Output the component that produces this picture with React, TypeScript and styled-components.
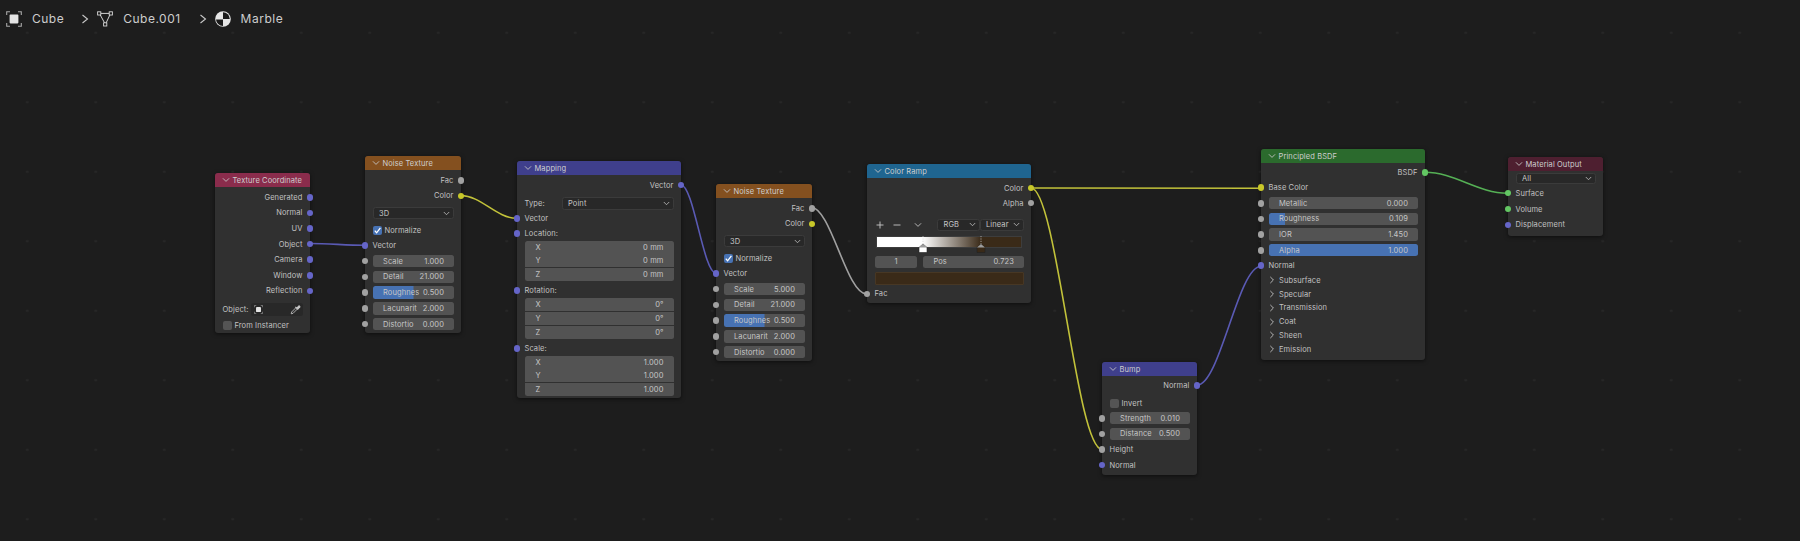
import React from "react";
import styled, { createGlobalStyle } from "styled-components";

const GlobalStyle = createGlobalStyle`
  html, body {
    margin: 0;
    padding: 0;
    background: #1d1d1d;
  }
  * {
    box-sizing: border-box;
  }
`;

const SOCKET = {
  vector: "#6565c8",
  value: "#a1a1a1",
  color: "#c7c729",
  shader: "#63c763",
};

const Canvas = styled.div`
  position: relative;
  width: 1800px;
  height: 541px;
  overflow: hidden;
  background-color: #1d1d1d;
  background-image: radial-gradient(circle, #272727 0, #272727 1px, transparent 1.6px);
  background-size: 68.5px 69.5px;
  background-position: -7px -2px;
  font-family: Inter, "Noto Sans", sans-serif;
  color: #c2c2c2;
`;

const Breadcrumb = styled.div`
  display: flex;
  align-items: center;
  height: 37px;
  padding-left: 6px;
  font-size: 12px;
  letter-spacing: 0.5px;
  color: #cdcdcd;
`;

const CrumbText = styled.span`
  margin-left: 10px;
`;

const CrumbArrow = styled.svg<{ $ml: number }>`
  margin: 0 8px 0 ${(p) => p.$ml}px;
`;

const Wires = styled.svg`
  position: absolute;
  left: 0;
  top: 0;
`;

const Node = styled.div<{ $x: number; $y: number; $w: number; $h: number }>`
  position: absolute;
  left: ${(p) => p.$x}px;
  top: ${(p) => p.$y}px;
  width: ${(p) => p.$w}px;
  height: ${(p) => p.$h}px;
  background: #303030;
  border-radius: 3px;
  box-shadow: 0 1px 4px rgba(0, 0, 0, 0.55);
  font-size: 7.5px;
  letter-spacing: 0.1px;
`;

const NodeHeader = styled.div<{ $color: string }>`
  display: flex;
  align-items: center;
  gap: 3px;
  height: 14px;
  padding-left: 6.5px;
  border-radius: 3px 3px 0 0;
  background: ${(p) => p.$color};
  color: #cecece;
`;

const NodeBody = styled.div<{ $pt?: number }>`
  display: flex;
  flex-direction: column;
  padding-top: ${(p) => p.$pt ?? 2.5}px;
`;

const Row = styled.div<{ $h?: number; $mt?: number; $right?: boolean }>`
  position: relative;
  flex: none;
  display: flex;
  align-items: center;
  justify-content: ${(p) => (p.$right ? "flex-end" : "flex-start")};
  height: ${(p) => p.$h ?? 15.6}px;
  margin-top: ${(p) => p.$mt ?? 0}px;
  padding: 0 7.5px;
  white-space: nowrap;
`;

const Socket = styled.span<{ $color: string; $side?: "left" | "right" }>`
  position: absolute;
  top: 50%;
  ${(p) => (p.$side === "right" ? "right" : "left")}: -3.3px;
  width: 6.6px;
  height: 6.6px;
  margin-top: -3.3px;
  border-radius: 50%;
  background: ${(p) => p.$color};
`;

const FieldBox = styled.div<{ $fill?: number; $w?: number; $gap?: number }>`
  display: flex;
  align-items: center;
  justify-content: space-between;
  flex: ${(p) => (p.$w ? "none" : "1")};
  width: ${(p) => (p.$w ? `${p.$w}px` : "auto")};
  height: 12.4px;
  margin-left: ${(p) => p.$gap ?? 0}px;
  padding: 0 9.5px 0 10.5px;
  border-radius: 2.5px;
  background-color: #535353;
  background-image: linear-gradient(#4772b3, #4772b3);
  background-repeat: no-repeat;
  background-size: ${(p) => (p.$fill ?? 0) * 100}% 100%;
  color: #c6c6c6;
`;

const IndexText = styled.span`
  flex: 1;
  text-align: center;
`;

const StackedFields = styled.div`
  display: flex;
  flex-direction: column;
  gap: 0.8px;
  margin: 0.9px 7.5px 0;
  border-radius: 2.5px;
  overflow: hidden;
`;

const StackedField = styled.div`
  display: flex;
  align-items: center;
  justify-content: space-between;
  height: 13px;
  padding: 0 10px 0 11px;
  background: #535353;
  color: #c6c6c6;
`;

const Dropdown = styled.div<{ $w?: number; $h?: number }>`
  display: flex;
  align-items: center;
  justify-content: space-between;
  flex: ${(p) => (p.$w ? "none" : "1")};
  width: ${(p) => (p.$w ? `${p.$w}px` : "auto")};
  height: ${(p) => p.$h ?? 12.5}px;
  padding: 0 2.5px 0 5.5px;
  border: 1px solid #3b3b3b;
  border-radius: 2.5px;
  background: #282828;
  color: #c6c6c6;
`;

const TypeDropdown = styled(Dropdown)`
  margin-left: auto;
`;

const CheckBox = styled.span<{ $on?: boolean }>`
  display: inline-flex;
  align-items: center;
  justify-content: center;
  flex: none;
  width: 9px;
  height: 9px;
  margin-right: 3px;
  border-radius: 2px;
  background: ${(p) => (p.$on ? "#4772b3" : "#545454")};
`;

const ObjectField = styled.div`
  display: flex;
  align-items: center;
  justify-content: space-between;
  width: 52px;
  height: 13px;
  margin-left: auto;
  padding: 0 2px 0 3px;
  border-radius: 2.5px;
  background: #282828;
`;

const PanelRow = styled(Row)`
  gap: 3px;
  padding-left: 7px;
  height: 13.8px;
`;

const RampTools = styled(Row)`
  height: 12.6px;
  margin-top: 8.2px;
  padding-left: 9px;
`;

const ToolGlyph = styled.span`
  display: inline-flex;
  justify-content: center;
  width: 8px;
  margin-right: 9px;
`;

const ToolChevron = styled(ToolGlyph)`
  margin-left: 4px;
  margin-right: 14px;
`;

const RampBar = styled.div`
  position: relative;
  height: 12.3px;
  margin: 4.7px 9px 0;
  border: 1px solid #3d3d3d;
  background: linear-gradient(
    to right,
    #fff 0,
    #fff 31.7%,
    #3a2a18 72.3%,
    #3a2a18 100%
  );
`;

const RampHandle = styled.svg<{ $at: number }>`
  position: absolute;
  left: ${(p) => p.$at}%;
  top: -1px;
  margin-left: -5px;
  overflow: visible;
`;

const ColorBar = styled.div`
  height: 13px;
  margin: 4.3px 7.5px 0;
  border: 1px solid #473724;
  border-radius: 1px;
  background: #3a2a18;
`;

const Chevron = ({ open = true, size = 8, color = "#c4c4c4" }: { open?: boolean; size?: number; color?: string }) => (
  <svg width={size} height={size} viewBox="0 0 8 8" fill="none">
    <path
      d={open ? "M1.2 2.6 L4 5.4 L6.8 2.6" : "M2.6 1.2 L5.4 4 L2.6 6.8"}
      stroke={color}
      strokeWidth="0.9"
      strokeLinecap="round"
      strokeLinejoin="round"
    />
  </svg>
);

const Check = () => (
  <svg width="9" height="9" viewBox="0 0 9 9" fill="none">
    <path d="M1.8 4.6 L3.6 6.8 L7.4 1.8" stroke="#fff" strokeWidth="1.3" />
  </svg>
);

const ObjectIcon = ({ size = 16 }: { size?: number }) => (
  <svg width={size} height={size} viewBox="0 0 16 16" fill="none">
    <rect x="3.6" y="3.6" width="8.8" height="8.8" rx="0.8" fill="#e4e4e4" />
    <path
      d="M0.7 4 V0.7 H4 M12 0.7 H15.3 V4 M15.3 12 V15.3 H12 M4 15.3 H0.7 V12"
      stroke="#a8a8a8"
      strokeWidth="1.1"
    />
  </svg>
);

const MeshIcon = () => (
  <svg width="16" height="16" viewBox="0 0 16 16" fill="none">
    <path d="M2.4 2.4 H13.6 L8.4 13.4 Z" stroke="#d4d4d4" strokeWidth="1" />
    <rect x="0.6" y="0.8" width="3.2" height="3.2" fill="#1d1d1d" stroke="#d8d8d8" strokeWidth="0.9" />
    <rect x="12.2" y="0.8" width="3.2" height="3.2" fill="#1d1d1d" stroke="#d8d8d8" strokeWidth="0.9" />
    <rect x="6.6" y="11.8" width="3.2" height="3.2" fill="#1d1d1d" stroke="#d8d8d8" strokeWidth="0.9" />
  </svg>
);

const MaterialIcon = () => (
  <svg width="16" height="16" viewBox="0 0 16 16">
    <circle cx="8" cy="8" r="7.8" fill="#e6e6e6" />
    <path d="M8 1.2 A6.8 6.8 0 0 1 14.8 8 H8 Z" fill="#1a1a1a" />
    <path d="M1 8.4 H8 V15 A7 7 0 0 1 1 8.4 Z" fill="#1a1a1a" />
  </svg>
);

const Dropper = () => (
  <svg width="11" height="11" viewBox="0 0 11 11" fill="none">
    <path d="M1.2 9.8 L1.6 8 L6 3.6 L7.4 5 L3 9.4 Z" fill="#333" stroke="#c8c8c8" strokeWidth="0.8" />
    <path d="M5.4 2.8 L8.2 5.6 M7 3.9 L9 1.9 A1 1 0 0 1 9.9 3 L7.9 4.8" fill="#c8c8c8" stroke="#c8c8c8" strokeWidth="1.1" />
  </svg>
);

const Handle = ({ fill, at }: { fill: string; at: number }) => (
  <RampHandle $at={at} width="10" height="18" viewBox="0 0 10 18" fill="none">
    <path d="M5 0 V8" stroke="#d0d0d0" strokeWidth="0.7" strokeDasharray="1.2 1.2" />
    <path d="M5 8 L9 11.5 V16.5 H1 V11.5 Z" fill={fill} stroke="#222" strokeWidth="0.6" />
    <path d="M5 8 L9 11.5 H1 Z" fill="#9c9c9c" />
  </RampHandle>
);

type OutProps = { label: string; color?: string; h?: number; mt?: number };

const Output = ({ label, color = SOCKET.vector, h, mt }: OutProps) => (
  <Row $right $h={h} $mt={mt}>
    {label}
    <Socket $side="right" $color={color} />
  </Row>
);

const Input = ({ label, color = SOCKET.vector, h, mt }: OutProps) => (
  <Row $h={h} $mt={mt}>
    {label}
    <Socket $color={color} />
  </Row>
);

type ValueProps = { label: string; value: string; fill?: number; h?: number };

const Value = ({ label, value, fill, h }: ValueProps) => (
  <Row $h={h}>
    <Socket $color={SOCKET.value} />
    <FieldBox $fill={fill}>
      <span>{label}</span>
      <span>{value}</span>
    </FieldBox>
  </Row>
);

const Head = ({ color, title }: { color: string; title: string }) => (
  <NodeHeader $color={color}>
    <Chevron />
    {title}
  </NodeHeader>
);

const NoiseNode = ({ x, y, h, scale }: { x: number; y: number; h: number; scale: string }) => (
  <Node $x={x} $y={y} $w={96} $h={h}>
    <Head color="#84501f" title="Noise Texture" />
    <NodeBody>
      <Output label="Fac" color={SOCKET.value} />
      <Output label="Color" color={SOCKET.color} />
      <Row $h={19}>
        <Dropdown>
          3D
          <Chevron size={7} />
        </Dropdown>
      </Row>
      <Row $h={15}>
        <CheckBox $on>
          <Check />
        </CheckBox>
        Normalize
      </Row>
      <Input label="Vector" />
      <Value h={15.75} label="Scale" value={scale} />
      <Value h={15.75} label="Detail" value="21.000" />
      <Value h={15.75} label="Roughnes" value="0.500" fill={0.5} />
      <Value h={15.75} label="Lacunarit" value="2.000" />
      <Value h={15.75} label="Distortio" value="0.000" />
    </NodeBody>
  </Node>
);

const XYZ = ({ unit }: { unit: string }) => (
  <StackedFields>
    {["X", "Y", "Z"].map((axis) => (
      <StackedField key={axis}>
        <span>{axis}</span>
        <span>{unit}</span>
      </StackedField>
    ))}
  </StackedFields>
);

const wire = (x1: number, y1: number, x2: number, y2: number, k = 0.36) => {
  const d = Math.abs(x2 - x1) * k;
  return `M${x1} ${y1} C${x1 + d} ${y1} ${x2 - d} ${y2} ${x2} ${y2}`;
};

const WIRES = [
  { d: wire(310, 243.5, 365, 245.3), c: "#5a5ab4" },
  { d: wire(461, 195.6, 516.5, 218.3), c: "#c2c23a" },
  { d: wire(681, 185, 716, 273.3), c: "#5a5ab4" },
  { d: wire(811, 207.3, 866.5, 294), c: "#a0a0a0" },
  { d: wire(1031, 188, 1261, 188.3, 0), c: "#c2c23a" },
  { d: wire(1031, 188, 1102, 449.3), c: "#c2c23a" },
  { d: wire(1197, 385.3, 1261, 266.3), c: "#5a5ab4" },
  { d: wire(1425, 172.3, 1507.5, 193.3), c: "#55b055" },
];

export default function App() {
  return (
    <Canvas>
      <GlobalStyle />
      <Breadcrumb>
        <ObjectIcon />
        <CrumbText>Cube</CrumbText>
        <CrumbArrow $ml={17} width="8" height="12" viewBox="0 0 8 12" fill="none">
          <path d="M1.5 2 L6.5 6 L1.5 10" stroke="#c8c8c8" strokeWidth="1.1" />
        </CrumbArrow>
        <MeshIcon />
        <CrumbText>Cube.001</CrumbText>
        <CrumbArrow $ml={18} width="8" height="12" viewBox="0 0 8 12" fill="none">
          <path d="M1.5 2 L6.5 6 L1.5 10" stroke="#c8c8c8" strokeWidth="1.1" />
        </CrumbArrow>
        <MaterialIcon />
        <CrumbText>Marble</CrumbText>
      </Breadcrumb>

      <Wires width="1800" height="541" viewBox="0 0 1800 541" fill="none">
        {WIRES.map((w, i) => (
          <path key={i} d={w.d} stroke={w.c} strokeWidth="1.6" />
        ))}
      </Wires>

      <Node $x={215} $y={173} $w={95} $h={160}>
        <Head color="#8a2c4c" title="Texture Coordinate" />
        <NodeBody>
          <Output label="Generated" />
          <Output label="Normal" />
          <Output label="UV" />
          <Output label="Object" />
          <Output label="Camera" />
          <Output label="Window" />
          <Output label="Reflection" />
          <Row $h={21}>
            Object:
            <ObjectField>
              <ObjectIcon size={9} />
              <Dropper />
            </ObjectField>
          </Row>
          <Row $h={11.2}>
            <CheckBox />
            From Instancer
          </Row>
        </NodeBody>
      </Node>

      <NoiseNode x={365} y={156} h={177} scale="1.000" />

      <Node $x={517} $y={161} $w={164} $h={237}>
        <Head color="#3f3f8c" title="Mapping" />
        <NodeBody>
          <Output label="Vector" h={15} />
          <Row $h={13} $mt={4.3}>
            Type:
            <TypeDropdown $w={112}>
              Point
              <Chevron size={7} />
            </TypeDropdown>
          </Row>
          <Input label="Vector" h={17} />
          <Input label="Location:" h={13} />
          <XYZ unit="0 mm" />
          <Input label="Rotation:" h={13} mt={3} />
          <XYZ unit="0°" />
          <Input label="Scale:" h={13} mt={3} />
          <XYZ unit="1.000" />
        </NodeBody>
      </Node>

      <NoiseNode x={716} y={184} h={177} scale="5.000" />

      <Node $x={867} $y={164} $w={164} $h={139}>
        <Head color="#1f6590" title="Color Ramp" />
        <NodeBody>
          <Output label="Color" color={SOCKET.color} h={15} />
          <Output label="Alpha" color={SOCKET.value} h={15} />
          <RampTools>
            <ToolGlyph>
              <svg width="8" height="8" viewBox="0 0 8 8" fill="none">
                <path d="M4 0.5 V7.5 M0.5 4 H7.5" stroke="#c8c8c8" strokeWidth="0.9" />
              </svg>
            </ToolGlyph>
            <ToolGlyph>
              <svg width="8" height="8" viewBox="0 0 8 8" fill="none">
                <path d="M0.5 4 H7.5" stroke="#c8c8c8" strokeWidth="0.9" />
              </svg>
            </ToolGlyph>
            <ToolChevron>
              <Chevron />
            </ToolChevron>
            <TypeDropdown $w={42.5}>
              RGB
              <Chevron size={7} />
            </TypeDropdown>
            <Dropdown $w={44}>
              Linear
              <Chevron size={7} />
            </Dropdown>
          </RampTools>
          <RampBar>
            <Handle fill="#fff" at={31.7} />
            <Handle fill="#3a2a18" at={72.3} />
          </RampBar>
          <Row $h={12} $mt={7.7}>
            <FieldBox $w={42}>
              <IndexText>1</IndexText>
            </FieldBox>
            <FieldBox $gap={6.4}>
              <span>Pos</span>
              <span>0.723</span>
            </FieldBox>
          </Row>
          <ColorBar />
          <Input label="Fac" color={SOCKET.value} h={15.4} mt={1} />
        </NodeBody>
      </Node>

      <Node $x={1261} $y={149} $w={164} $h={211}>
        <Head color="#2b6a2d" title="Principled BSDF" />
        <NodeBody $pt={2}>
          <Output label="BSDF" color={SOCKET.shader} h={15} />
          <Input label="Base Color" color={SOCKET.color} h={15.4} />
          <Value h={15.7} label="Metallic" value="0.000" />
          <Value h={15.7} label="Roughness" value="0.109" fill={0.109} />
          <Value h={15.7} label="IOR" value="1.450" />
          <Value h={15.7} label="Alpha" value="1.000" fill={1} />
          <Input label="Normal" h={15.2} />
          {["Subsurface", "Specular", "Transmission", "Coat", "Sheen", "Emission"].map((name) => (
            <PanelRow key={name}>
              <Chevron open={false} />
              {name}
            </PanelRow>
          ))}
        </NodeBody>
      </Node>

      <Node $x={1102} $y={362} $w={95} $h={113}>
        <Head color="#3f3f8c" title="Bump" />
        <NodeBody $pt={2}>
          <Output label="Normal" h={15} />
          <Row $h={14.5} $mt={3}>
            <CheckBox />
            Invert
          </Row>
          <Value label="Strength" value="0.010" />
          <Value label="Distance" value="0.500" />
          <Input label="Height" color={SOCKET.value} />
          <Input label="Normal" />
        </NodeBody>
      </Node>

      <Node $x={1508} $y={157} $w={95} $h={79}>
        <Head color="#4e1f30" title="Material Output" />
        <NodeBody $pt={2.3}>
          <Row $h={11}>
            <Dropdown $h={11}>
              All
              <Chevron size={7} />
            </Dropdown>
          </Row>
          <Input label="Surface" color={SOCKET.shader} h={15.9} mt={0.9} />
          <Input label="Volume" color={SOCKET.shader} h={15.9} />
          <Input label="Displacement" h={15.9} />
        </NodeBody>
      </Node>
    </Canvas>
  );
}
